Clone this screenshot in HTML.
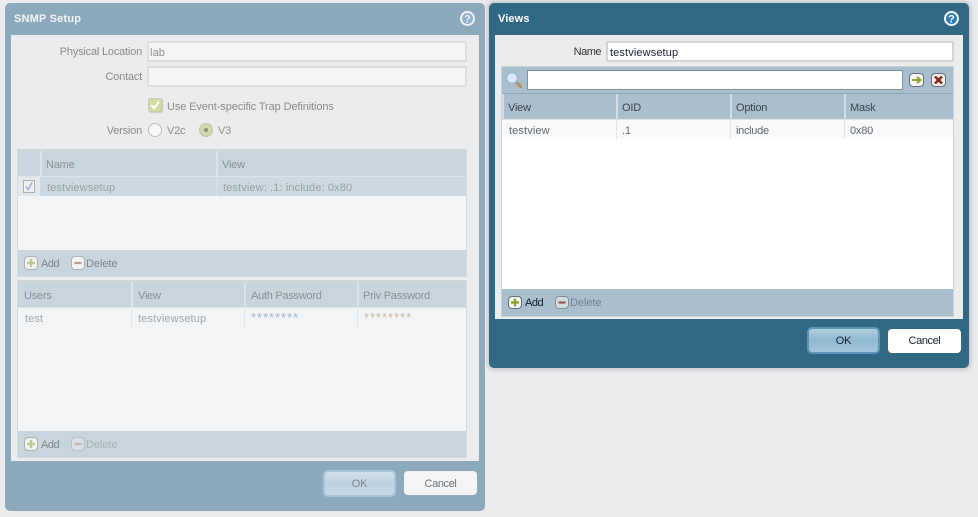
<!DOCTYPE html>
<html>
<head>
<meta charset="utf-8">
<style>
html,body{margin:0;padding:0;width:978px;height:517px;overflow:hidden;background:#ebecee;}
body{position:relative;font-family:"Liberation Sans",sans-serif;font-size:11px;color:#000;}
div,span.t{position:absolute;box-sizing:border-box;}
.t{white-space:nowrap;line-height:14px;height:14px;position:absolute;letter-spacing:-.2px;margin-top:1px;}
.v{letter-spacing:.12px;}
.r{text-align:right;}
svg{position:absolute;overflow:visible;}
</style>
</head>
<body>

<!-- LEFT PANEL -->
<div style="left:5px;top:3px;width:480px;height:508px;background:#8da9bc;border-radius:5px;"></div>
<div class="t v" style="left:14px;top:11px;font-weight:bold;color:#f2f5f7;font-size:11px;letter-spacing:.2px;">SNMP Setup</div>
<svg style="left:460px;top:11px" width="15" height="15" viewBox="0 0 15 15"><circle cx="7.5" cy="7.5" r="6.5" fill="#8fb0cb" stroke="#eef2f5" stroke-width="2"/><text x="7.5" y="11.5" font-size="11" font-weight="bold" text-anchor="middle" fill="#eef2f5" font-family="Liberation Sans">?</text></svg>
<div style="left:11px;top:35px;width:468px;height:426px;background:#ebecee;"></div>

<div class="t r" style="left:40px;width:102px;top:44px;color:#8b8b8b;">Physical Location</div>
<div style="left:147px;top:41px;width:320px;height:21px;background:#f4f5f7;border:2px solid #dcdedf;"></div>
<div class="t v" style="left:150px;top:45px;color:#8f8f8f;">lab</div>
<div class="t r" style="left:40px;width:102px;top:69px;color:#8b8b8b;">Contact</div>
<div style="left:147px;top:66px;width:320px;height:21px;background:#f4f5f7;border:2px solid #dcdedf;"></div>

<div style="left:148px;top:98px;width:14px;height:14px;background:#cfdb9f;border:1px solid #c4cbb4;border-radius:2px;box-shadow:1px 1px 1px #c8c8c8;"></div>
<svg style="left:148px;top:98px" width="14" height="14" viewBox="0 0 14 14"><path d="M3.2 7.2L6 10.3L11 3.6" fill="none" stroke="#fbfdf5" stroke-width="2.2"/></svg>
<div class="t" style="left:167px;top:99px;color:#8b8b8b;letter-spacing:-.11px;">Use Event-specific Trap Definitions</div>

<div class="t r" style="left:40px;width:102px;top:123px;color:#8b8b8b;">Version</div>
<div style="left:148px;top:123px;width:14px;height:14px;background:#f7f8f8;border:1px solid #bdbdbd;border-radius:50%;"></div>
<div class="t" style="left:167px;top:123px;color:#8b8b8b;">V2c</div>
<div style="left:199px;top:123px;width:14px;height:14px;background:#cfd8a8;border:1px solid #bfc5ad;border-radius:50%;"></div>
<div style="left:204px;top:128px;width:4px;height:4px;background:#8c9285;border-radius:50%;"></div>
<div class="t" style="left:218px;top:123px;color:#8b8b8b;">V3</div>

<!-- left table 1 -->
<div style="left:17px;top:149px;width:450px;height:128px;background:#c9d5dd;border:1px solid #d6dadd;border-top:2px solid #d3d6d8;"></div>
<div style="left:18px;top:151px;width:448px;height:26px;background:#c9d5dd;border-bottom:1px solid #dbe3e8;"></div>
<div style="left:40px;top:151px;width:2px;height:26px;background:#dbe3e8;"></div>
<div style="left:216px;top:151px;width:2px;height:26px;background:#dbe3e8;"></div>
<div style="left:18px;top:177px;width:448px;height:19px;background:#cdd9e1;"></div>
<div style="left:18px;top:177px;width:22px;height:19px;background:#e3e8ec;"></div>
<div style="left:216px;top:177px;width:1px;height:19px;background:#d6e0e6;"></div>
<div style="left:18px;top:196px;width:448px;height:54px;background:#f2f4f6;"></div>
<div class="t" style="left:46px;top:157px;color:#8b9095;">Name</div>
<div class="t" style="left:222px;top:157px;color:#8b9095;">View</div>
<div style="left:23px;top:180px;width:12px;height:13px;background:#eef0f3;border:1px solid #a9aeb3;"></div>
<svg style="left:23px;top:180px" width="12" height="13" viewBox="0 0 12 13"><path d="M3 6.5L5.2 9.5L9.2 2.5" fill="none" stroke="#a3aed3" stroke-width="1.5"/></svg>
<div class="t v" style="left:47px;top:180px;color:#9aa0a3;">testviewsetup</div>
<div class="t v" style="left:223px;top:180px;color:#9aa0a3;">testview: .1: include: 0x80</div>
<!-- toolbar 1 -->
<div style="left:24px;top:256px;width:14px;height:14px;background:#f2f3f0;border:1px solid #a9b2b6;border-radius:4px;"></div>
<svg style="left:24px;top:256px" width="14" height="14" viewBox="0 0 14 14"><path d="M7 3V11M3 7H11" stroke="#bcc98f" stroke-width="2.4"/></svg>
<div class="t" style="left:41px;top:256px;color:#80868c;letter-spacing:-.5px;">Add</div>
<div style="left:71px;top:256px;width:14px;height:14px;background:#f2f3f3;border:1px solid #a9b2b6;border-radius:4px;"></div>
<svg style="left:71px;top:256px" width="14" height="14" viewBox="0 0 14 14"><path d="M3.5 7H10.5" stroke="#c2968d" stroke-width="2.2"/></svg>
<div class="t" style="left:86px;top:256px;color:#80868c;letter-spacing:-.05px;">Delete</div>

<!-- left table 2 -->
<div style="left:17px;top:280px;width:450px;height:178px;background:#c9d5dd;border:1px solid #d6dadd;border-top:2px solid #d3d6d8;"></div>
<div style="left:18px;top:282px;width:448px;height:26px;background:#c9d5dd;border-bottom:1px solid #dbe3e8;"></div>
<div style="left:131px;top:282px;width:2px;height:26px;background:#dbe3e8;"></div>
<div style="left:244px;top:282px;width:2px;height:26px;background:#dbe3e8;"></div>
<div style="left:357px;top:282px;width:2px;height:26px;background:#dbe3e8;"></div>
<div style="left:18px;top:308px;width:448px;height:123px;background:#f2f4f6;"></div>
<div style="left:131px;top:308px;width:1px;height:19px;background:#e3e6e9;"></div>
<div style="left:244px;top:308px;width:1px;height:19px;background:#e3e6e9;"></div>
<div style="left:357px;top:308px;width:1px;height:19px;background:#e3e6e9;"></div>
<div class="t" style="left:24px;top:288px;color:#8b9095;">Users</div>
<div class="t" style="left:138px;top:288px;color:#8b9095;">View</div>
<div class="t" style="left:251px;top:288px;color:#8b9095;letter-spacing:-.26px;">Auth Password</div>
<div class="t" style="left:363px;top:288px;color:#8b9095;letter-spacing:-.26px;">Priv Password</div>
<div class="t v" style="left:25px;top:311px;color:#a3a8ab;">test</div>
<div class="t v" style="left:138px;top:311px;color:#a3a8ab;">testviewsetup</div>
<div class="t" style="left:251px;top:310px;color:#9fb8cf;font-size:13px;letter-spacing:.95px;">********</div>
<div class="t" style="left:364px;top:310px;color:#c9b9a6;font-size:13px;letter-spacing:.95px;">********</div>
<!-- toolbar 2 -->
<div style="left:24px;top:437px;width:14px;height:14px;background:#f2f3f0;border:1px solid #a9b2b6;border-radius:4px;"></div>
<svg style="left:24px;top:437px" width="14" height="14" viewBox="0 0 14 14"><path d="M7 3V11M3 7H11" stroke="#bcc98f" stroke-width="2.4"/></svg>
<div class="t" style="left:41px;top:437px;color:#80868c;letter-spacing:-.5px;">Add</div>
<div style="left:71px;top:437px;width:14px;height:14px;background:#d9dfe3;border:1px solid #b7c1c7;border-radius:4px;"></div>
<svg style="left:71px;top:437px" width="14" height="14" viewBox="0 0 14 14"><path d="M3.5 7H10.5" stroke="#c9b3ad" stroke-width="2.2"/></svg>
<div class="t" style="left:86px;top:437px;color:#aab1b6;letter-spacing:-.05px;">Delete</div>

<!-- left buttons -->
<div style="left:323px;top:470px;width:73px;height:27px;border:2px solid #a6c5d8;border-radius:5px;background:linear-gradient(#d0dfe8,#bcd2e0 50%,#c6d9e5);"></div>
<div class="t" style="left:323px;width:73px;top:476px;text-align:center;color:#7b8389;">OK</div>
<div style="left:404px;top:471px;width:73px;height:24px;background:#f4f5f7;border-radius:4px;"></div>
<div class="t" style="left:404px;width:73px;top:476px;text-align:center;color:#6e7277;letter-spacing:-.38px;">Cancel</div>

<!-- RIGHT PANEL -->
<div style="left:489px;top:3px;width:480px;height:365px;background:#316985;border-radius:5px;box-shadow:0 0 4px 2px #c4c6c8;"></div>
<div class="t v" style="left:498px;top:11px;font-weight:bold;color:#fff;">Views</div>
<svg style="left:944px;top:11px" width="15" height="15" viewBox="0 0 15 15"><circle cx="7.5" cy="7.5" r="6.5" fill="#2d7db5" stroke="#f0f5f8" stroke-width="2"/><text x="7.5" y="11.5" font-size="11" font-weight="bold" text-anchor="middle" fill="#fff" font-family="Liberation Sans">?</text></svg>
<div style="left:495px;top:35px;width:468px;height:284px;background:#ebecee;"></div>

<div class="t r" style="left:530px;width:71px;top:44px;color:#333;letter-spacing:-.5px;">Name</div>
<div style="left:606px;top:41px;width:348px;height:21px;background:#fff;border:2px solid #d2d4d5;"></div>
<div class="t v" style="left:610px;top:45px;color:#1a2035;">testviewsetup</div>

<div style="left:501px;top:66px;width:453px;height:251px;background:#a9bfce;border:1px solid #c8d2d9;"></div>
<svg style="left:505px;top:71px" width="18" height="18" viewBox="0 0 18 18"><path d="M11 11L15.5 15.5" stroke="#c08a50" stroke-width="3" stroke-linecap="round"/><circle cx="7" cy="7" r="5.5" fill="#dbe8f8" stroke="#98b8e0" stroke-width="1.5"/></svg>
<div style="left:527px;top:70px;width:376px;height:20px;background:#fff;border:1px solid #7e919e;"></div>
<div style="left:909px;top:73px;width:15px;height:14px;background:#f5f6f2;border:1px solid #5e6e78;border-radius:4px;"></div>
<svg style="left:909px;top:73px" width="15" height="14" viewBox="0 0 15 14"><path d="M3 7H10M8 4L11.5 7L8 10" fill="none" stroke="#8ea22d" stroke-width="2"/></svg>
<div style="left:931px;top:73px;width:15px;height:14px;background:#f5f3f0;border:1px solid #5e6e78;border-radius:4px;"></div>
<svg style="left:931px;top:73px" width="15" height="14" viewBox="0 0 15 14"><path d="M4 3.5L11 10.5M11 3.5L4 10.5" stroke="#7d2a10" stroke-width="2.6"/></svg>

<div style="left:502px;top:93px;width:451px;height:1px;background:#8ea5b5;"></div>
<div style="left:502px;top:119px;width:451px;height:1px;background:#dfe6ea;"></div>
<div style="left:616px;top:94px;width:2px;height:26px;background:#d5dee4;"></div>
<div style="left:730px;top:94px;width:2px;height:26px;background:#d5dee4;"></div>
<div style="left:844px;top:94px;width:2px;height:26px;background:#d5dee4;"></div>
<div style="left:502px;top:94px;width:2px;height:26px;background:#d5dee4;"></div>
<div style="left:502px;top:120px;width:451px;height:169px;background:#fff;"></div>
<div style="left:502px;top:120px;width:451px;height:19px;background:#f9fafc;"></div>
<div style="left:616px;top:120px;width:1px;height:19px;background:#e4e7ea;"></div>
<div style="left:730px;top:120px;width:1px;height:19px;background:#e4e7ea;"></div>
<div style="left:844px;top:120px;width:1px;height:19px;background:#e4e7ea;"></div>
<div class="t" style="left:508px;top:100px;color:#3c444b;">View</div>
<div class="t" style="left:622px;top:100px;color:#3c444b;">OID</div>
<div class="t" style="left:736px;top:100px;color:#3c444b;">Option</div>
<div class="t" style="left:850px;top:100px;color:#3c444b;">Mask</div>
<div class="t v" style="left:509px;top:123px;color:#5f666b;">testview</div>
<div class="t" style="left:622px;top:123px;color:#5f666b;">.1</div>
<div class="t" style="left:736px;top:123px;color:#5f666b;letter-spacing:-.3px;">include</div>
<div class="t" style="left:850px;top:123px;color:#5f666b;">0x80</div>

<div style="left:508px;top:296px;width:14px;height:13px;background:#f5f6f2;border:1px solid #5e6e78;border-radius:4px;"></div>
<svg style="left:508px;top:295px" width="14" height="14" viewBox="0 0 14 14"><path d="M7 3.5V11.5M3 7.5H11" stroke="#8ea22d" stroke-width="2.4"/></svg>
<div class="t" style="left:525px;top:295px;color:#10192a;letter-spacing:-.5px;">Add</div>
<div style="left:555px;top:296px;width:14px;height:13px;background:#d3dbe0;border:1px solid #7f909b;border-radius:4px;"></div>
<svg style="left:555px;top:295px" width="14" height="14" viewBox="0 0 14 14"><path d="M3.5 7.5H10.5" stroke="#93574a" stroke-width="2.2"/></svg>
<div class="t" style="left:570px;top:295px;color:#76838c;letter-spacing:-.05px;">Delete</div>

<div style="left:807px;top:327px;width:73px;height:27px;border:2px solid #5c95b8;border-radius:5px;background:linear-gradient(#b3cfe0,#8fb8d2 50%,#a3c6dc);"></div>
<div class="t" style="left:807px;width:73px;top:333px;text-align:center;color:#16202c;">OK</div>
<div style="left:888px;top:329px;width:73px;height:24px;background:#fff;border-radius:4px;"></div>
<div class="t" style="left:888px;width:73px;top:333px;text-align:center;color:#16202c;letter-spacing:-.38px;">Cancel</div>

</body>
</html>
